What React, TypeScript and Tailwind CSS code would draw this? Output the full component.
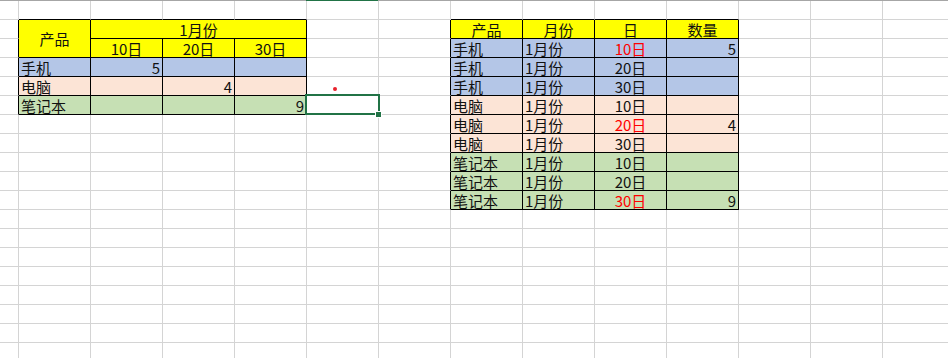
import React from 'react';

// One sheet cell: text, alignment, fill and optional merge span
interface Cell {
  text?: string;
  align?: 'left' | 'center' | 'right';
  middle?: boolean;
  red?: boolean;
  fill?: string;
  colSpan?: number;
  rowSpan?: number;
}

const COLS = 14;
const ROWS = 19;

const YELLOW = 'bg-[#ffff00]';
const BLUE = 'bg-[#b4c6e7]';
const PEACH = 'bg-[#fce4d6]';
const GREEN = 'bg-[#c6e0b4]';

const cells: Record<string, Cell> = {};
const covered = new Set<string>();

const put = (c: number, r: number, cell: Cell) => {
  cells[`${c},${r}`] = cell;
  const cs = cell.colSpan ?? 1;
  const rs = cell.rowSpan ?? 1;
  for (let i = 0; i < cs; i++) {
    for (let j = 0; j < rs; j++) {
      if (i || j) covered.add(`${c + i},${r + j}`);
    }
  }
};

// Pivot-style table (B2:E6)
put(1, 1, { text: '产品', align: 'center', middle: true, fill: YELLOW, rowSpan: 2 });
put(2, 1, { text: '1月份', align: 'center', fill: YELLOW, colSpan: 3 });
['10日', '20日', '30日'].forEach((d, i) => put(2 + i, 2, { text: d, align: 'center', fill: YELLOW }));

const pivot: [string, string, (string | undefined)[]][] = [
  ['手机', BLUE, ['5', undefined, undefined]],
  ['电脑', PEACH, [undefined, '4', undefined]],
  ['笔记本', GREEN, [undefined, undefined, '9']],
];
pivot.forEach(([name, fill, vals], i) => {
  put(1, 3 + i, { text: name, fill });
  vals.forEach((v, j) => put(2 + j, 3 + i, { text: v, align: 'right', fill }));
});

// Flat list table (H2:K11)
['产品', '月份', '日', '数量'].forEach((h, i) => put(7 + i, 1, { text: h, align: 'center', fill: YELLOW }));

const flat: [string, string, string, string | undefined, boolean][] = [
  ['手机', BLUE, '10日', '5', true],
  ['手机', BLUE, '20日', undefined, false],
  ['手机', BLUE, '30日', undefined, false],
  ['电脑', PEACH, '10日', undefined, false],
  ['电脑', PEACH, '20日', '4', true],
  ['电脑', PEACH, '30日', undefined, false],
  ['笔记本', GREEN, '10日', undefined, false],
  ['笔记本', GREEN, '20日', undefined, false],
  ['笔记本', GREEN, '30日', '9', true],
];
flat.forEach(([name, fill, day, qty, red], i) => {
  const r = 2 + i;
  put(7, r, { text: name, fill });
  put(8, r, { text: '1月份', fill });
  put(9, r, { text: day, align: 'center', red, fill });
  put(10, r, { text: qty, align: 'right', fill });
});

const inTable = (c: number, r: number) =>
  (c >= 1 && c <= 4 && r >= 1 && r <= 5) || (c >= 7 && c <= 10 && r >= 1 && r <= 10);

function clsx(...parts: (string | false | undefined)[]) {
  return parts.filter(Boolean).join(' ');
}

function SheetCell({ c, r }: { c: number; r: number }) {
  const cell = cells[`${c},${r}`] ?? {};
  const cEnd = c + (cell.colSpan ?? 1) - 1;
  const rEnd = r + (cell.rowSpan ?? 1) - 1;
  const rightDark = inTable(cEnd, r) || inTable(cEnd + 1, r);
  const bottomDark = inTable(c, rEnd) || inTable(c, rEnd + 1);

  return (
    <div
      className={clsx(
        'flex border-r border-b px-[2px] overflow-hidden whitespace-nowrap',
        rightDark ? 'border-r-black' : 'border-r-[#d4d4d4]',
        bottomDark ? 'border-b-black' : 'border-b-[#d4d4d4]',
        cell.middle ? 'items-center' : 'items-end',
        cell.align === 'center' ? 'justify-center' : cell.align === 'right' ? 'justify-end' : 'justify-start',
        cell.colSpan === 3 && 'col-span-3',
        cell.rowSpan === 2 && 'row-span-2',
        cell.fill ?? 'bg-white',
        cell.red ? 'text-[#ff0000]' : 'text-[#111]'
      )}
    >
      {cell.text && <span className="leading-[16px]">{cell.text}</span>}
    </div>
  );
}

export default function App() {
  const items: React.ReactNode[] = [];
  for (let r = 0; r < ROWS; r++) {
    for (let c = 0; c < COLS; c++) {
      if (covered.has(`${c},${r}`)) continue;
      items.push(<SheetCell key={`${c}-${r}`} c={c} r={r} />);
    }
  }

  return (
    <div className="relative w-[948px] h-[358px] overflow-hidden bg-white font-['Noto_Sans_CJK_SC','Noto_Sans',sans-serif] text-[15px]">
      <div className="h-px bg-[#a6a6a6]" />
      <div className="grid grid-cols-[19px_repeat(13,72px)] auto-rows-[19px]">{items}</div>

      {/* active column marker on the header edge */}
      <div className="absolute left-[306px] top-0 w-[72px] h-px bg-[#217346]" />

      {/* selected cell F6 with fill handle */}
      <div className="absolute left-[305px] top-[94px] w-[75px] h-[21px] border-2 border-[#217346]" />
      <div className="absolute left-[375px] top-[111px] w-[7px] h-[7px] border border-white bg-[#217346]" />

      {/* pointer dot */}
      <div className="absolute left-[333px] top-[87px] w-[4px] h-[4px] rounded-full bg-[#e8212b]" />
    </div>
  );
}
